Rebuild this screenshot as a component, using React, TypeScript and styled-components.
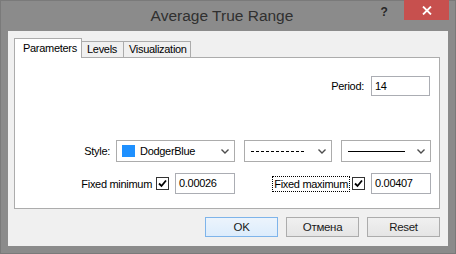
import React from 'react';
import styled, { createGlobalStyle } from 'styled-components';

const GlobalStyle = createGlobalStyle`
  html, body {
    margin: 0;
    padding: 0;
    background: #ffffff;
  }
  body {
    font-family: "Liberation Sans", Arial, sans-serif;
    font-size: 11px;
    letter-spacing: -0.3px;
    color: #000;
  }
`;

const Window = styled.div`
  display: flex;
  flex-direction: column;
  width: 456px;
  height: 254px;
  background: #8b8b8b;
  box-sizing: border-box;
  border: 1px solid #7a7a7a;
`;

const TitleBar = styled.div`
  display: grid;
  grid-template-columns: 1fr auto 1fr;
  height: 30px;
  align-items: start;
`;

const Title = styled.div`
  grid-column: 2;
  padding-top: 6px;
  padding-right: 12px;
  font-size: 15.5px;
  letter-spacing: 0;
  color: #303030;
  white-space: nowrap;
`;

const Controls = styled.div`
  grid-column: 3;
  justify-self: end;
  display: flex;
  align-items: flex-start;
  padding-right: 6px;
  margin-top: -1px;
`;

const HelpButton = styled.div`
  width: 30px;
  height: 20px;
  display: flex;
  align-items: center;
  justify-content: center;
  font-weight: bold;
  font-size: 12px;
  color: #262626;
  margin-right: 5px;
  padding-top: 2px;
`;

const CloseButton = styled.div`
  width: 45px;
  height: 20px;
  background: #c7504e;
  display: flex;
  align-items: center;
  justify-content: center;
`;

const Client = styled.div`
  flex: 1;
  display: flex;
  flex-direction: column;
  margin: 0 7px 7px 7px;
  padding: 7px 8px 9px 6px;
  background: #f0f0f0;
`;

const TabStrip = styled.div`
  display: flex;
  align-items: flex-end;
  height: 20px;
  margin-bottom: -1px;
  position: relative;
  z-index: 1;
`;

const Tab = styled.div<{ $active?: boolean; $w: number }>`
  box-sizing: border-box;
  width: ${p => p.$w}px;
  height: ${p => (p.$active ? 20 : 17)}px;
  padding: ${p => (p.$active ? '3px 0 0 8px' : '1px 0 0 5px')};
  border: 1px solid #acacac;
  border-bottom: ${p => (p.$active ? 'none' : '1px solid #acacac')};
  border-left: ${p => (p.$active ? '1px solid #acacac' : 'none')};
  background: ${p => (p.$active ? '#ffffff' : '#f0f0f0')};
  white-space: nowrap;
`;

const Panel = styled.div`
  flex: 1;
  box-sizing: border-box;
  border: 1px solid #acacac;
  background: #ffffff;
  padding: 18px 8px 0 0;
`;

const PeriodRow = styled.div`
  display: flex;
  justify-content: flex-end;
  align-items: center;
  gap: 7px;
  margin-right: 1px;
  margin-bottom: 44px;
`;

const FieldGrid = styled.div`
  display: grid;
  grid-template-columns: 95px 125px 97px 99px;
  grid-template-rows: 22px 21px;
  row-gap: 11px;
  align-items: center;
`;

const Label = styled.span<{ $focus?: boolean }>`
  white-space: nowrap;
  outline: ${p => (p.$focus ? '1px dotted #000' : 'none')};
  outline-offset: 1px;
`;

const StyleLabel = styled(Label)`
  justify-self: end;
`;

const Combo = styled.div<{ $w: number }>`
  justify-self: end;
  box-sizing: border-box;
  width: ${p => p.$w}px;
  height: 22px;
  border: 1px solid #acacac;
  background: #ffffff;
  display: flex;
  align-items: center;
  padding: 0 5px 0 5px;
  gap: 5px;
`;

const Swatch = styled.div<{ $color: string }>`
  width: 13px;
  height: 12px;
  background: ${p => p.$color};
  flex: none;
`;

const ComboText = styled.span`
  flex: 1;
  white-space: nowrap;
`;

const LineSample = styled.div<{ $dashed?: boolean }>`
  flex: 1;
  height: 1px;
  margin: 0 7px 0 1px;
  background: ${p =>
    p.$dashed ? 'repeating-linear-gradient(90deg, #000 0 3px, transparent 3px 5px)' : '#000'};
`;

const FieldGroup = styled.div<{ $cols: string }>`
  grid-column: ${p => p.$cols};
  justify-self: end;
  display: flex;
  align-items: center;
`;

const CheckBox = styled.div`
  box-sizing: border-box;
  width: 13px;
  height: 13px;
  border: 1px solid #333;
  background: #fff;
  display: flex;
  align-items: center;
  justify-content: center;
  margin: 0 6px 0 4px;
`;

const Input = styled.div<{ $w: number; $h: number }>`
  box-sizing: border-box;
  width: ${p => p.$w}px;
  height: ${p => p.$h}px;
  border: 1px solid #abadb3;
  background: #fff;
  padding: 3px 0 0 3px;
  white-space: nowrap;
`;

const ButtonRow = styled.div`
  display: flex;
  justify-content: flex-end;
  gap: 8px;
  margin-top: 8px;
`;

const Button = styled.div<{ $default?: boolean }>`
  box-sizing: border-box;
  width: 73px;
  height: 20px;
  display: flex;
  align-items: center;
  justify-content: center;
  border: 1px solid ${p => (p.$default ? '#7eb4ea' : '#acacac')};
  background: ${p => (p.$default ? 'linear-gradient(#ecf4fc, #dcecfc)' : 'linear-gradient(#f0f0f0, #e5e5e5)')};
  font-size: 11.5px;
  color: #1a1a1a;
`;

const Chevron = () => (
  <svg width="8" height="5" viewBox="0 0 8 5" style={{ flex: 'none' }}>
    <polyline points="0.5,0.5 4,4 7.5,0.5" fill="none" stroke="#4d4d4d" strokeWidth="1.4" />
  </svg>
);

const Check = () => (
  <svg width="9" height="9" viewBox="0 0 9 9">
    <polyline points="1,4.5 3.5,7 8,1.5" fill="none" stroke="#000" strokeWidth="1.8" />
  </svg>
);

const CloseGlyph = () => (
  <svg width="10" height="9" viewBox="0 0 10 9">
    <path d="M1 0.5 L9 8.5 M9 0.5 L1 8.5" stroke="#fff" strokeWidth="1.8" />
  </svg>
);

export default function App() {
  return (
    <>
      <GlobalStyle />
      <Window>
        <TitleBar>
          <Title>Average True Range</Title>
          <Controls>
            <HelpButton>?</HelpButton>
            <CloseButton>
              <CloseGlyph />
            </CloseButton>
          </Controls>
        </TitleBar>
        <Client>
          <TabStrip>
            <Tab $active $w={68}>Parameters</Tab>
            <Tab $w={42}>Levels</Tab>
            <Tab $w={67}>Visualization</Tab>
          </TabStrip>
          <Panel>
            <PeriodRow>
              <Label>Period:</Label>
              <Input $w={59} $h={20}>14</Input>
            </PeriodRow>
            <FieldGrid>
              <StyleLabel>Style:</StyleLabel>
              <Combo $w={119}>
                <Swatch $color="#1e90ff" />
                <ComboText>DodgerBlue</ComboText>
                <Chevron />
              </Combo>
              <Combo $w={88}>
                <LineSample $dashed />
                <Chevron />
              </Combo>
              <Combo $w={90}>
                <LineSample />
                <Chevron />
              </Combo>
              <FieldGroup $cols="1 / 3">
                <Label>Fixed minimum</Label>
                <CheckBox>
                  <Check />
                </CheckBox>
                <Input $w={60} $h={21}>0.00026</Input>
              </FieldGroup>
              <FieldGroup $cols="3 / 5">
                <Label $focus>Fixed maximum</Label>
                <CheckBox>
                  <Check />
                </CheckBox>
                <Input $w={60} $h={21}>0.00407</Input>
              </FieldGroup>
            </FieldGrid>
          </Panel>
          <ButtonRow>
            <Button $default>OK</Button>
            <Button>Отмена</Button>
            <Button>Reset</Button>
          </ButtonRow>
        </Client>
      </Window>
    </>
  );
}
